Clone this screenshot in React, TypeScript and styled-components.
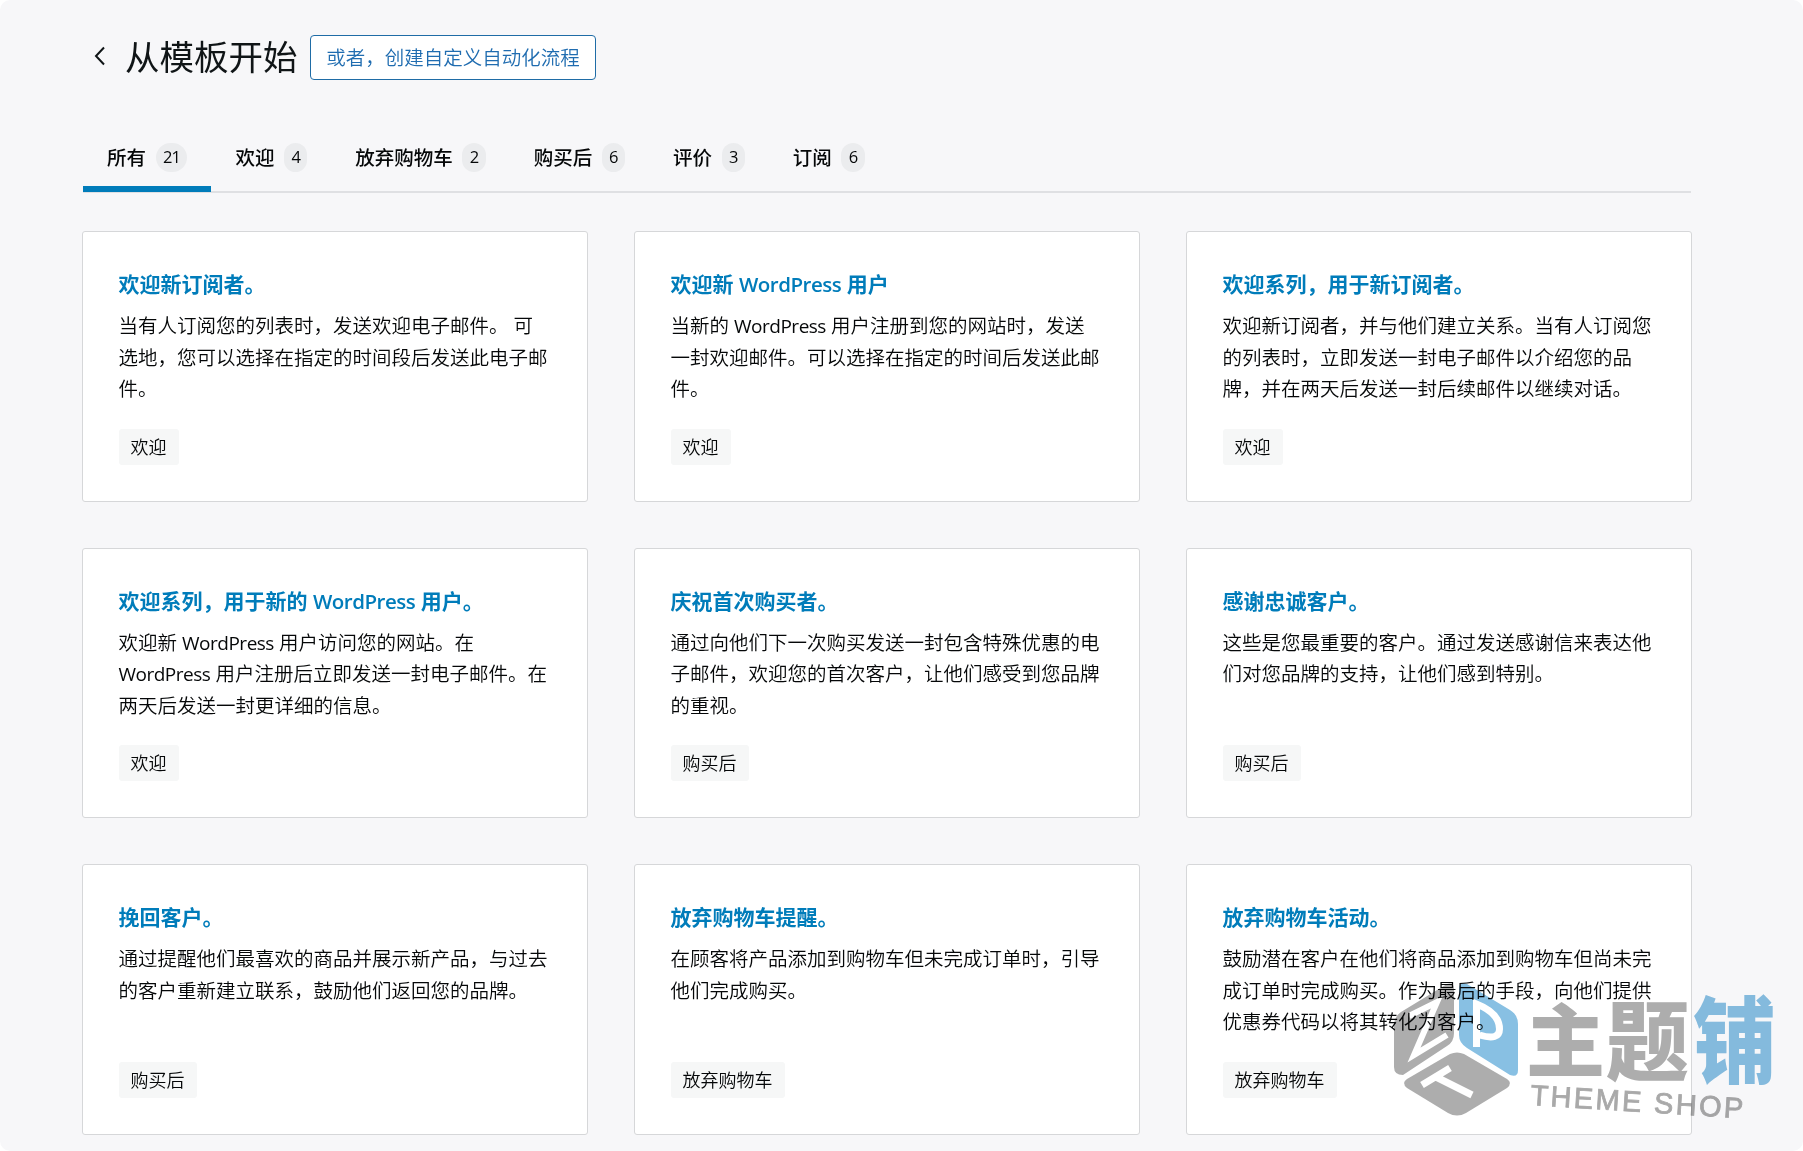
import React from "react";
import styled, { createGlobalStyle } from "styled-components";

const Global = createGlobalStyle`
  * { box-sizing: border-box; }
  html, body { margin: 0; background: #fff; }
  body { font-family: "Open Sans", "Noto Sans CJK SC", sans-serif; color: #050708; font-weight: 350; }
  button { font: inherit; color: inherit; cursor: pointer; }
`;

const Page = styled.div`
  position: relative;
  width: 1803px;
  height: 1151px;
  padding: 35px 111px 0 82px;
  background: #f7f7f9;
  border-radius: 10px;
  overflow: hidden;
`;

const Header = styled.header`
  display: flex;
  align-items: center;
  height: 45px;
`;

const Back = styled.button`
  display: flex;
  margin: 0 19px 3px 12px;
  padding: 0;
  border: 0;
  background: none;
`;

const Title = styled.h1`
  margin: 0 12px 2px 0;
  width: 173px;
  font-size: 34.5px;
  font-weight: 400;
  color: #101517;
  line-height: 45px;
  white-space: nowrap;
`;

const Custom = styled.button`
  width: 286px;
  height: 45px;
  padding: 0 0 2px;
  border: 1px solid #1f6ca6;
  border-radius: 4px;
  background: #fff;
  && { color: #1f6cb0; }
  font-size: 19.5px;
  white-space: nowrap;
`;

const Tabs = styled.nav`
  display: flex;
  height: 72px;
  margin: 41px 1px 38px 1px;
  box-shadow: inset 0 -2px #dfe0e3;
`;

const Tab = styled.button<{ $active?: boolean }>`
  display: flex;
  align-items: center;
  gap: 9.6px;
  height: 71px;
  padding: 1px 24px 0;
  border: 0;
  background: none;
  box-shadow: ${(p) => (p.$active ? "inset 0 -6px #007cba" : "none")};
  font-size: 19.5px;
  font-weight: 500;
  line-height: 30px;
`;

const Label = styled.span`
  padding-top: 1px;
`;

const Count = styled.span`
  padding: 0 7.3px;
  height: 29px;
  border-radius: 15px;
  background: #ebecee;
  font-size: 16.5px;
  font-weight: 400;
  line-height: 28px;
  letter-spacing: -0.8px;
`;

const Grid = styled.main`
  display: grid;
  grid-template-columns: repeat(3, 506px);
  grid-auto-rows: 270.6px;
  gap: 46px;
`;

const Card = styled.article`
  display: flex;
  flex-direction: column;
  align-items: flex-start;
  padding: 35px 35.5px 36px;
  border: 1px solid #d6d7d9;
  border-radius: 3px;
  background: #fff;
`;

const CardTitle = styled.h2`
  margin: 0 0 9px;
  color: #007cba;
  font-size: 21px;
  font-weight: 700;
  line-height: 34px;
  white-space: nowrap;
`;

const Latin = styled.span<{ $heading?: boolean }>`
  font-weight: ${(p) => (p.$heading ? 600 : 400)};
  font-size: ${(p) => (p.$heading ? "20.5px" : "19px")};
  line-height: 1;
  letter-spacing: -0.5px;
`;

const Description = styled.p`
  margin: 0;
  font-size: 19.5px;
  line-height: 31.5px;
  white-space: pre;
`;

const Line = styled.span`
  display: block;
`;

const Tag = styled.span`
  margin-top: auto;
  height: 36px;
  padding: 0 12px;
  border-radius: 3px;
  background: #f6f7f7;
  font-size: 18px;
  line-height: 36px;
`;

const Watermark = styled.svg`
  position: absolute;
  left: 1385px;
  top: 975px;
  overflow: visible;
  mix-blend-mode: multiply;
  pointer-events: none;
`;

const Glyph = styled.text`
  font-family: "Noto Sans CJK SC", sans-serif;
  font-weight: 900;
`;

const Brand = styled.text`
  font-family: "Liberation Sans", sans-serif;
  font-size: 29px;
  font-weight: 400;
`;

const tabs: [string, number][] = [
  ["所有", 21],
  ["欢迎", 4],
  ["放弃购物车", 2],
  ["购买后", 6],
  ["评价", 3],
  ["订阅", 6],
];

const cards = [
  { title: "欢迎新订阅者。", text: "当有人订阅您的列表时，发送欢迎电子邮件。 可\n选地，您可以选择在指定的时间段后发送此电子邮\n件。", tag: "欢迎" },
  { title: "欢迎新 WordPress 用户", text: "当新的 WordPress 用户注册到您的网站时，发送\n一封欢迎邮件。可以选择在指定的时间后发送此邮\n件。", tag: "欢迎" },
  { title: "欢迎系列，用于新订阅者。", text: "欢迎新订阅者，并与他们建立关系。当有人订阅您\n的列表时，立即发送一封电子邮件以介绍您的品\n牌，并在两天后发送一封后续邮件以继续对话。", tag: "欢迎" },
  { title: "欢迎系列，用于新的 WordPress 用户。", text: "欢迎新 WordPress 用户访问您的网站。在\nWordPress 用户注册后立即发送一封电子邮件。在\n两天后发送一封更详细的信息。", tag: "欢迎" },
  { title: "庆祝首次购买者。", text: "通过向他们下一次购买发送一封包含特殊优惠的电\n子邮件，欢迎您的首次客户，让他们感受到您品牌\n的重视。", tag: "购买后" },
  { title: "感谢忠诚客户。", text: "这些是您最重要的客户。通过发送感谢信来表达他\n们对您品牌的支持，让他们感到特别。", tag: "购买后" },
  { title: "挽回客户。", text: "通过提醒他们最喜欢的商品并展示新产品，与过去\n的客户重新建立联系，鼓励他们返回您的品牌。", tag: "购买后" },
  { title: "放弃购物车提醒。", text: "在顾客将产品添加到购物车但未完成订单时，引导\n他们完成购买。", tag: "放弃购物车" },
  { title: "放弃购物车活动。", text: "鼓励潜在客户在他们将商品添加到购物车但尚未完\n成订单时完成购买。作为最后的手段，向他们提供\n优惠券代码以将其转化为客户。", tag: "放弃购物车" },
];

const mixed = (text: string, heading = false) =>
  text.split(/(WordPress)/).map((part, i) =>
    part === "WordPress" ? <Latin key={i} $heading={heading}>{part}</Latin> : part
  );

export default function App() {
  return (
    <>
      <Global />
      <Page>
        <Header>
          <Back aria-label="返回">
            <svg width="12" height="20" viewBox="0 0 12 20" fill="none" stroke="#101517" strokeWidth="2">
              <path d="M10 1.5 2 10l8 8.5" />
            </svg>
          </Back>
          <Title>从模板开始</Title>
          <Custom>或者，创建自定义自动化流程</Custom>
        </Header>
        <Tabs>
          {tabs.map(([label, count], i) => (
            <Tab key={label} $active={i === 0}>
              <Label>{label}</Label>
              <Count>{count}</Count>
            </Tab>
          ))}
        </Tabs>
        <Grid>
          {cards.map((c) => (
            <Card key={c.title}>
              <CardTitle>{mixed(c.title, true)}</CardTitle>
              <Description>
                {c.text.split("\n").map((line) => (
                  <Line key={line}>{mixed(line)}</Line>
                ))}
              </Description>
              <Tag>{c.tag}</Tag>
            </Card>
          ))}
        </Grid>
        <Watermark width="400" height="160" viewBox="0 0 400 160">
          <path fill="#adadad" d="M62 9q7-2 7 5v44q0 9-7 13L18 100q-9 0-9-8V50q0-8 7-13Z" />
          <path fill="#88c0e3" d="M74 14q0-8 8-5l43 26q8 5 8 14v46q0 8-8 5L82 73q-8-5-8-13Z" />
          <path fill="#adadad" d="M65 79q7-3 14 0l43 25q6 4 0 9l-41 25q-9 5-18 0L22 113q-6-5 0-9Z" />
          <g fill="none" stroke="#fff" strokeWidth="7">
            <path strokeWidth="6" d="M24 41 52 27 29 80 62 60" />
            <path d="M91.500 72V29q23 9 23 25 0 12-20 6" />
            <path d="M65 93 37 110M51 102 87 120" />
          </g>
          <Glyph fill="#adadad" fontSize="79" transform="translate(141 95.500)">主</Glyph>
          <Glyph fill="#adadad" fontSize="83" transform="translate(221 99) scale(1 1.05)">题</Glyph>
          <Glyph fill="#88c0e3" fontSize="83" transform="translate(308 101) scale(1 1.14)">铺</Glyph>
          <Brand fill="#a9a9a9" stroke="#a9a9a9" strokeWidth="0.8" textLength="213" transform="translate(145 130) rotate(3.6)">THEME SHOP</Brand>
        </Watermark>
      </Page>
    </>
  );
}
